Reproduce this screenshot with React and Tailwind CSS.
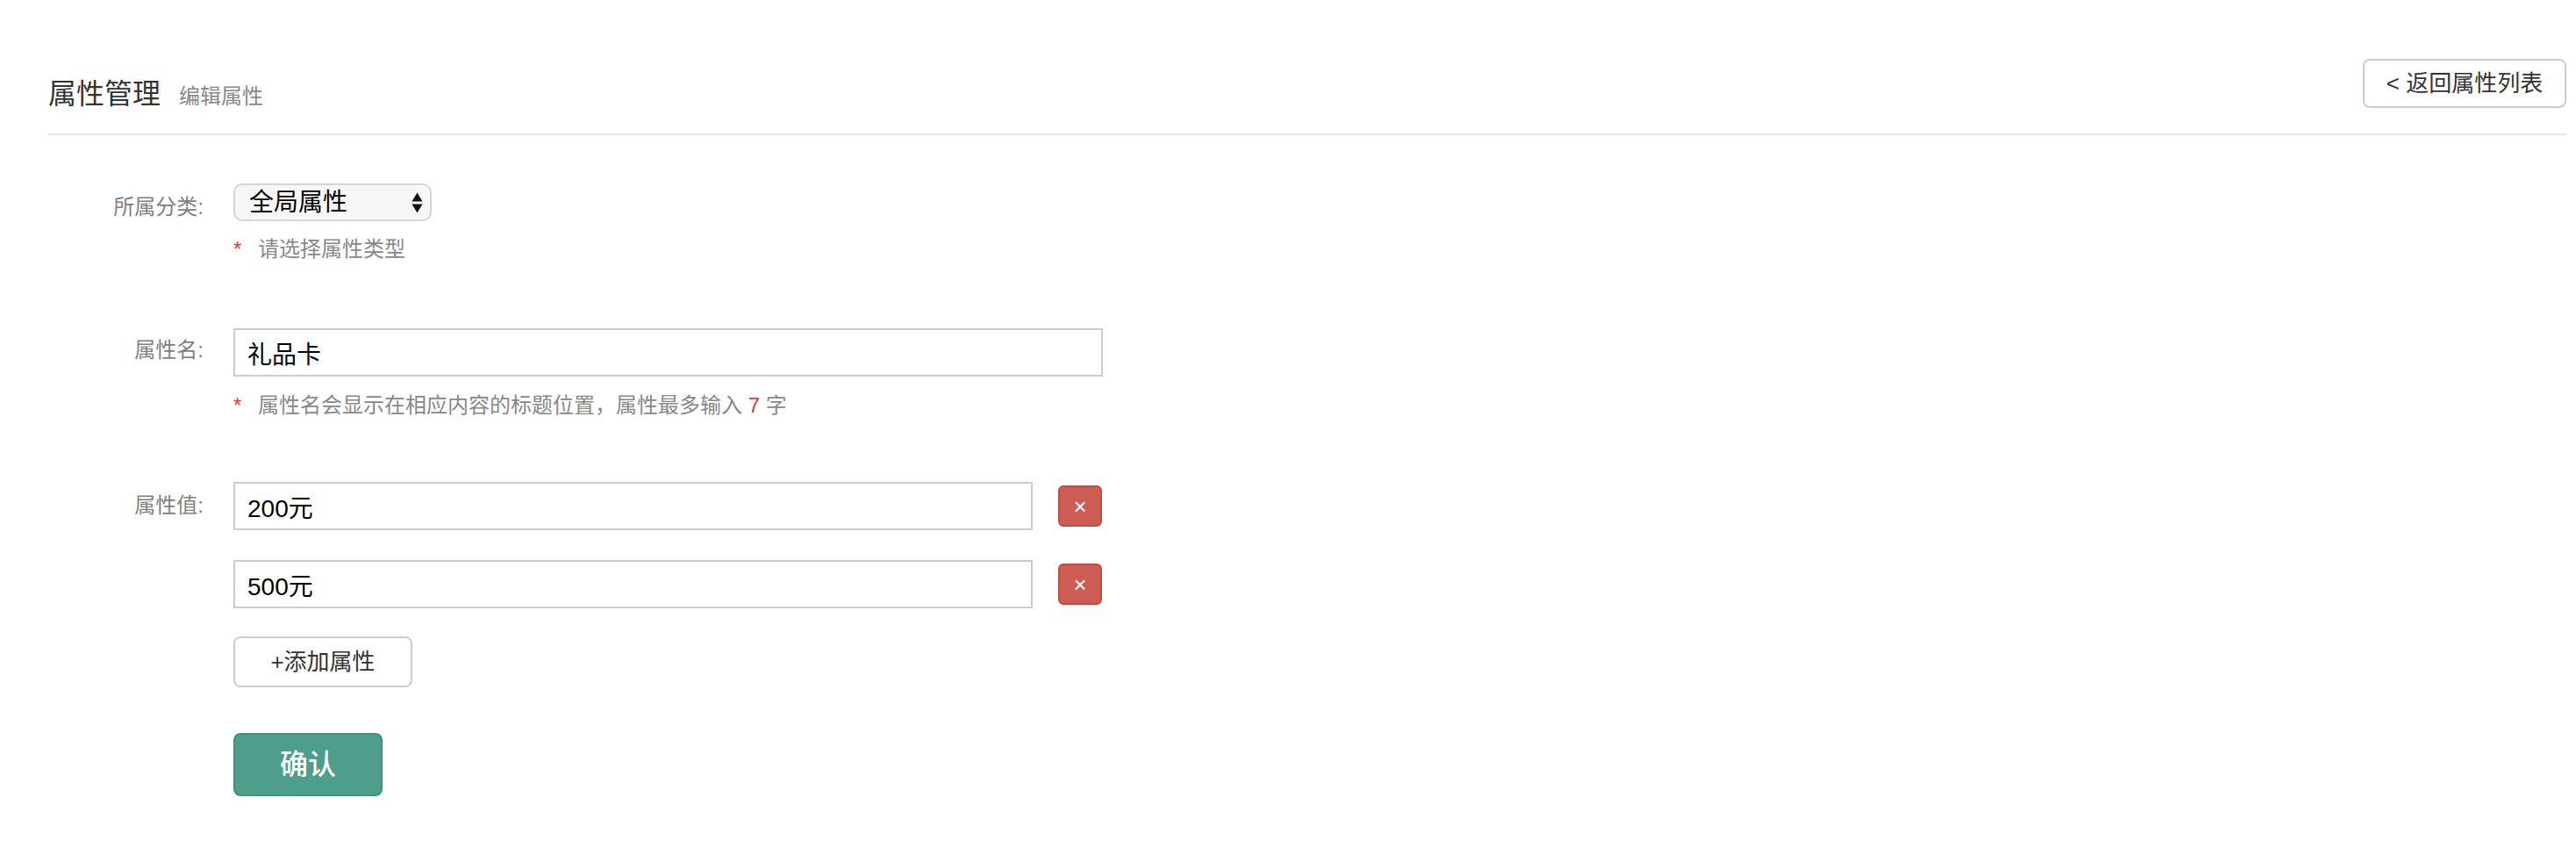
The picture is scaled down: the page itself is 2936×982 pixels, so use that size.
import React from "react";

function SelectArrows() {
  return (
    <svg width="13" height="24" viewBox="0 0 13 24" className="block">
      <path d="M6.5 0.5 L12.5 10.5 L0.5 10.5 Z" fill="#111" />
      <path d="M0.5 13.5 L12.5 13.5 L6.5 23.5 Z" fill="#111" />
    </svg>
  );
}

function Hint({ children }) {
  return (
    <div className="flex text-[24px] leading-[36px] text-[#888]">
      <span className="w-[28px] text-[#e4393c] font-['Liberation_Sans',sans-serif]">*</span>
      <span>{children}</span>
    </div>
  );
}

function TextInput({ value, width }) {
  return (
    <input
      readOnly
      value={value}
      className={`h-[55px] ${width} border-2 border-[#cccccc] bg-white px-[14px] text-[28px] text-black outline-none`}
    />
  );
}

function DeleteButton() {
  return (
    <button className="ml-[29px] flex h-[47px] w-[50px] items-center justify-center rounded-[6px] border-2 border-[#c4493f] bg-[#cd5c55] text-[26px] leading-none text-white font-['Liberation_Sans',sans-serif]">
      ×
    </button>
  );
}

export default function App() {
  return (
    <div className="min-h-[982px] w-full bg-white font-['Liberation_Sans','Noto_Sans_CJK_SC',sans-serif]">
      {/* header */}
      <div className="ml-[55px] mr-[11px] flex items-start justify-between border-b-2 border-[#e6e6e6] pt-[67px] pb-[24px]">
        <div className="mt-[20px] flex items-baseline">
          <h1 className="text-[32px] leading-[40px] font-normal text-[#333]">属性管理</h1>
          <span className="ml-[21px] text-[24px] text-[#888]">编辑属性</span>
        </div>
        <button className="h-[56px] w-[232px] rounded-[8px] border-2 border-[#cccccc] bg-white text-[26px] text-[#333]">
          &lt; 返回属性列表
        </button>
      </div>

      {/* form */}
      <div className="ml-[55px]">
        {/* row 1 */}
        <div className="mt-[55px] flex items-start">
          <div className="mt-[9px] w-[177px] text-right text-[24px] leading-[36px] text-[#7f7f7f]">所属分类:</div>
          <div className="ml-[34px]">
            <div className="flex h-[43px] w-[226px] items-center justify-between rounded-[10px] border-2 border-[#d6d6d6] bg-[#f7f7f7] pl-[16px] pr-[8px]">
              <span className="text-[28px] leading-none text-black">全局属性</span>
              <SelectArrows />
            </div>
            <div className="mt-[14px]">
              <Hint>请选择属性类型</Hint>
            </div>
          </div>
        </div>

        {/* row 2 */}
        <div className="mt-[72px] flex items-start">
          <div className="mt-[7px] w-[177px] text-right text-[24px] leading-[36px] text-[#7f7f7f]">属性名:</div>
          <div className="ml-[34px]">
            <TextInput value="礼品卡" width="w-[991px]" />
            <div className="mt-[15px]">
              <Hint>
                属性名会显示在相应内容的标题位置，属性最多输入 <span className="text-[#e4393c]">7</span> 字
              </Hint>
            </div>
          </div>
        </div>

        {/* row 3 */}
        <div className="mt-[69px] flex items-start">
          <div className="mt-[9px] w-[177px] text-right text-[24px] leading-[36px] text-[#7f7f7f]">属性值:</div>
          <div className="ml-[34px] flex flex-col">
            <div className="flex items-center">
              <TextInput value="200元" width="w-[911px]" />
              <DeleteButton />
            </div>
            <div className="mt-[34px] flex items-center">
              <TextInput value="500元" width="w-[911px]" />
              <DeleteButton />
            </div>
            <button className="mt-[32px] h-[58px] w-[204px] rounded-[8px] border-2 border-[#cccccc] bg-white text-[26px] text-[#333]">
              +添加属性
            </button>
            <button className="mt-[52px] h-[72px] w-[170px] rounded-[8px] border-2 border-[#44907c] bg-[#4d9e8a] text-[32px] font-medium text-white">
              确认
            </button>
          </div>
        </div>
      </div>
    </div>
  );
}
